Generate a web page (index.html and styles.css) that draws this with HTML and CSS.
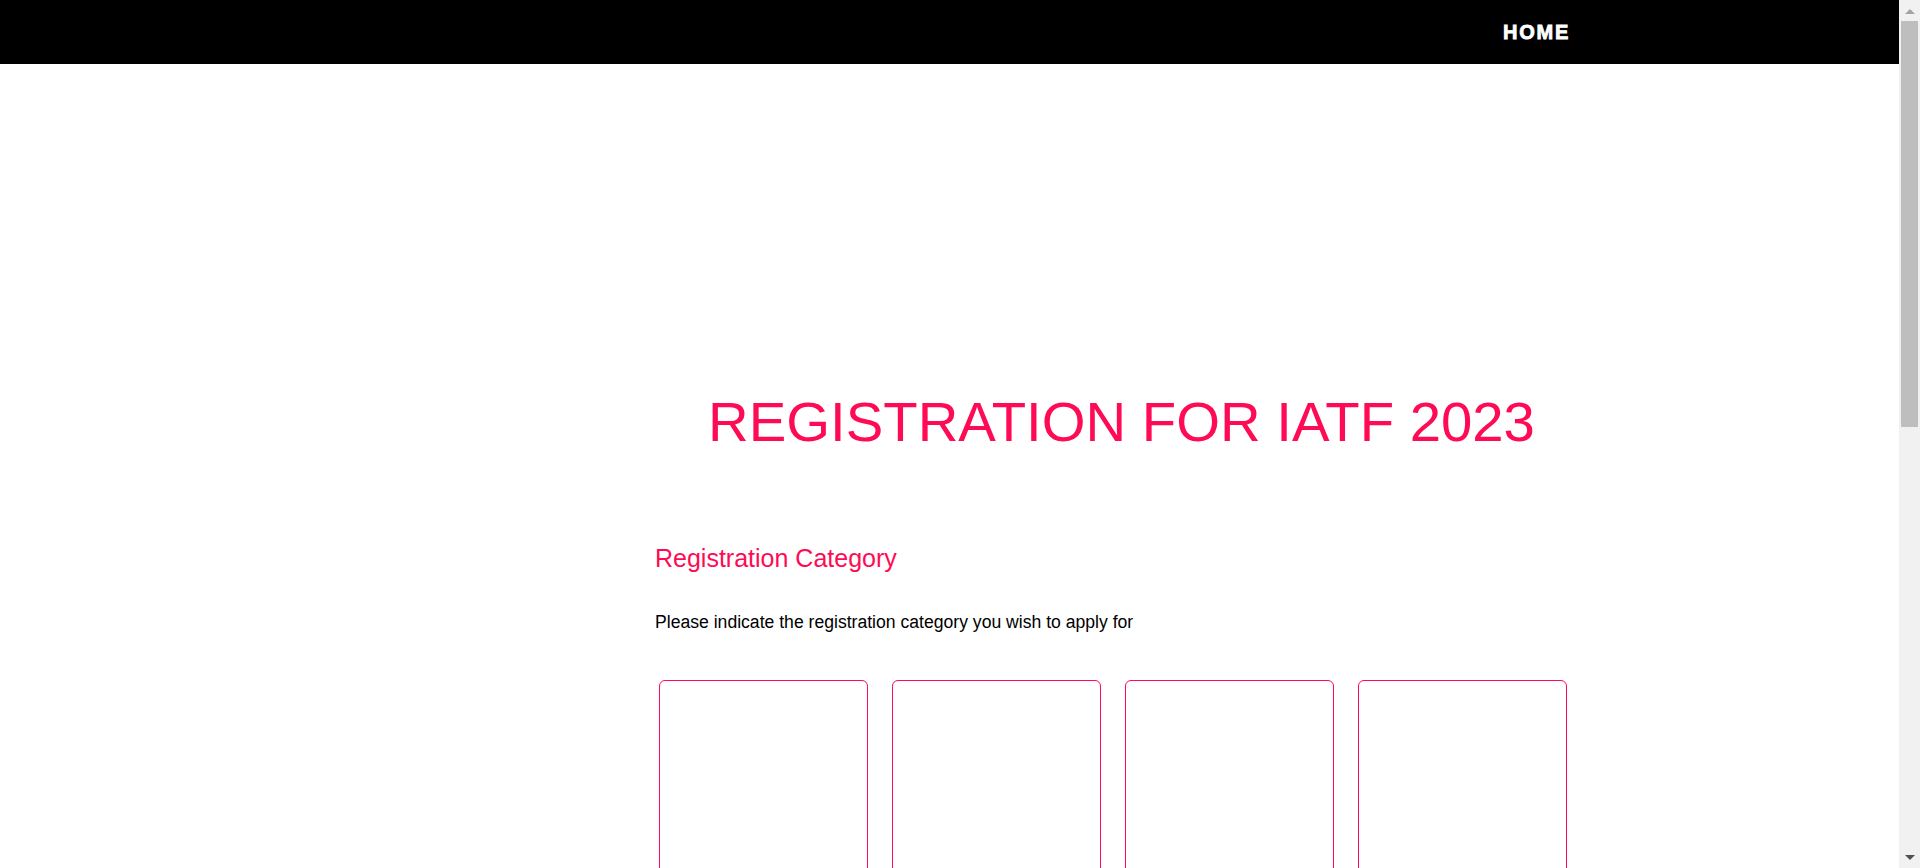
FILE: index.html
```html
<!DOCTYPE html>
<html lang="en">
<head>
<meta charset="utf-8">
<title>Registration for IATF 2023</title>
<link rel="stylesheet" href="styles.css">
</head>
<body>
<header class="topbar">
  <nav class="topbar-nav">
    <a class="nav-link" href="#">HOME</a>
  </nav>
</header>
<main class="page">
  <section class="content">
    <h1 class="title">REGISTRATION FOR IATF 2023</h1>
    <h2 class="section-title">Registration Category</h2>
    <p class="lead">Please indicate the registration category you wish to apply for</p>
    <div class="cards">
      <div class="card-col"><div class="card"></div></div>
      <div class="card-col"><div class="card"></div></div>
      <div class="card-col"><div class="card"></div></div>
      <div class="card-col"><div class="card"></div></div>
    </div>
  </section>
</main>
<div class="scrollbar" aria-hidden="true">
  <span class="sb-arrow sb-up"></span>
  <span class="sb-thumb"></span>
  <span class="sb-arrow sb-down"></span>
</div>
</body>
</html>
```

FILE: styles.css
```css
html, body {
  margin: 0;
  padding: 0;
}
body {
  font-family: "Liberation Sans", Arial, sans-serif;
  background: #fff;
  color: #000;
}
.topbar {
  height: 64px;
  background: #000;
  display: flex;
  align-items: center;
}
.topbar-nav {
  padding-left: 1503px;
  padding-top: 1px;
}
.nav-link {
  color: #fff;
  text-decoration: none;
  font-weight: 700;
  font-size: 20px;
  letter-spacing: 1.8px;
  -webkit-text-stroke: 0.8px #fff;
}
.page {
  min-height: 2903px;
}
.content {
  margin-left: 655px;
  width: 933px;
  padding-top: 326px;
}
.title {
  margin: 0;
  font-size: 56.3px;
  line-height: 64px;
  font-weight: 400;
  color: #ff0a54;
  text-align: center;
}
.section-title {
  margin: 0;
  padding-top: 90px;
  font-size: 25px;
  line-height: 28px;
  font-weight: 400;
  color: #ff0a54;
}
.lead {
  margin: 0;
  padding-top: 39px;
  font-size: 17.6px;
  line-height: 22px;
  color: #000;
}
.cards {
  display: grid;
  grid-template-columns: repeat(4, 233px);
  padding-top: 47px;
}
.card-col {
  padding-left: 4px;
}
.card {
  width: 207px;
  height: 420px;
  border: 1px solid #ff0a54;
  border-radius: 6px;
}

/* browser scrollbar overlay */
.scrollbar {
  position: fixed;
  top: 0;
  right: 0;
  width: 21px;
  height: 100vh;
  background: #f1f1f1;
  display: flex;
  flex-direction: column;
  align-items: center;
}
.sb-arrow {
  width: 0;
  height: 0;
  border-left: 5px solid transparent;
  border-right: 5px solid transparent;
}
.sb-up {
  margin-top: 9px;
  border-bottom: 5px solid #a3a3a3;
}
.sb-thumb {
  margin-top: 7px;
  width: 17px;
  height: 406px;
  background: #bebebe;
}
.sb-down {
  margin-top: auto;
  margin-bottom: 8px;
  border-top: 5px solid #505050;
}
```
